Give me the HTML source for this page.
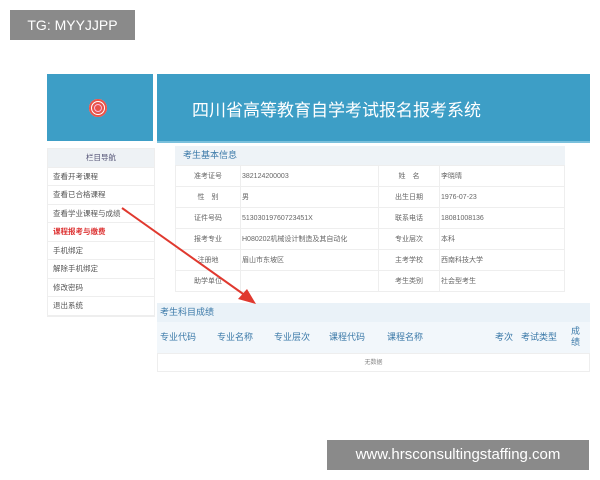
<!DOCTYPE html><html><head><meta charset="utf-8"><style>
body{margin:0;width:600px;height:480px;background:#fff;position:relative;overflow:hidden;font-family:"Liberation Sans","Noto Sans CJK SC",sans-serif}
.a{position:absolute}
.s{font-size:7px;color:#666}
.nav div{height:18.5px;line-height:18.5px;font-size:7.5px;color:#555;padding-left:5px;border-bottom:1px solid #eee;box-sizing:border-box}
</style></head><body>
<div class="a" style="left:10px;top:10px;width:125px;height:30px;background:#8a8a8a;color:#fff;font-size:14px;line-height:30px;text-align:center">TG: MYYJJPP</div>
<div class="a" style="left:47px;top:74px;width:106px;height:67px;background:#3d9ec6"></div>
<div class="a" style="left:89px;top:99px;width:18px;height:18px;border-radius:50%;background:#e8534a;box-shadow:inset 0 0 0 2px #e8534a,inset 0 0 0 3px #fff,inset 0 0 0 9px #e8534a"></div>
<div class="a" style="left:94px;top:104px;width:6px;height:6px;border:1px solid #fbd;border-radius:50%"></div>
<div class="a" style="left:157px;top:74px;width:433px;height:67px;background:#3d9ec6;border-bottom:2px solid #7ac0dc"></div>
<div class="a" style="left:192px;top:96px;color:#fff;font-size:17px">四川省高等教育自学考试报名报考系统</div>
<div class="a nav" style="left:47px;top:148px;width:106px;border:1px solid #eee">
<div style="background:#eef2f5;text-align:center;padding:0;color:#557">栏目导航</div>
<div>查看开考课程</div><div>查看已合格课程</div><div>查看学业课程与成绩</div>
<div style="color:#d33;font-weight:bold">课程报考与缴费</div><div>手机绑定</div><div>解除手机绑定</div><div>修改密码</div><div>退出系统</div></div>
<div class="a" style="left:175px;top:146px;width:390px;height:19px;background:#eef3f7;font-size:9px;line-height:19px;color:#3b79a8;padding-left:8px;box-sizing:border-box">考生基本信息</div>
<table class="a s" style="left:175px;top:165px;width:390px;border-collapse:collapse" cellspacing="0">
<tr style="height:21px"><td style="width:62px;text-align:center;border:1px solid #eee">准考证号</td><td style="width:135px;border:1px solid #eee">382124200003</td><td style="width:58px;text-align:center;border:1px solid #eee">姓　名</td><td style="border:1px solid #eee">李晓晴</td></tr>
<tr style="height:21px"><td style="text-align:center;border:1px solid #eee">性　别</td><td style="border:1px solid #eee">男</td><td style="text-align:center;border:1px solid #eee">出生日期</td><td style="border:1px solid #eee">1976-07-23</td></tr>
<tr style="height:21px"><td style="text-align:center;border:1px solid #eee">证件号码</td><td style="border:1px solid #eee">51303019760723451X</td><td style="text-align:center;border:1px solid #eee">联系电话</td><td style="border:1px solid #eee">18081008136</td></tr>
<tr style="height:21px"><td style="text-align:center;border:1px solid #eee">报考专业</td><td style="border:1px solid #eee">H080202机械设计制造及其自动化</td><td style="text-align:center;border:1px solid #eee">专业层次</td><td style="border:1px solid #eee">本科</td></tr>
<tr style="height:21px"><td style="text-align:center;border:1px solid #eee">注册地</td><td style="border:1px solid #eee">眉山市东坡区</td><td style="text-align:center;border:1px solid #eee">主考学校</td><td style="border:1px solid #eee">西南科技大学</td></tr>
<tr style="height:21px"><td style="text-align:center;border:1px solid #eee">助学单位</td><td style="border:1px solid #eee"></td><td style="text-align:center;border:1px solid #eee">考生类别</td><td style="border:1px solid #eee">社会型考生</td></tr>
</table>
<div class="a" style="left:157px;top:303px;width:433px;height:19px;background:#eaf2f8;font-size:9px;line-height:19px;color:#3b79a8;padding-left:3px;box-sizing:border-box">考生科目成绩</div>
<div class="a" style="left:157px;top:322px;width:433px;height:31px;background:#f2f7fb;font-size:9px;color:#3b79a8;line-height:31px">
<span class="a" style="left:3px">专业代码</span><span class="a" style="left:60px">专业名称</span><span class="a" style="left:117px">专业层次</span><span class="a" style="left:172px">课程代码</span><span class="a" style="left:230px">课程名称</span><span class="a" style="left:338px">考次</span><span class="a" style="left:364px">考试类型</span><span class="a" style="left:414px;line-height:11px;top:4px;width:10px">成绩</span></div>
<div class="a" style="left:157px;top:353px;width:433px;height:19px;border:1px solid #eee;box-sizing:border-box;font-size:6px;color:#888;text-align:center;line-height:19px">无数据</div>
<svg class="a" style="left:0;top:0" width="600" height="480"><line x1="122" y1="208" x2="246" y2="296" stroke="#e0392f" stroke-width="2"/><polygon points="256,304 238,299 247,289" fill="#e0392f"/></svg>
<div class="a" style="left:327px;top:440px;width:262px;height:30px;background:#8a8a8a;color:#fff;font-size:15px;line-height:30px;text-align:center">www.hrsconsultingstaffing.com</div>
</body></html>
